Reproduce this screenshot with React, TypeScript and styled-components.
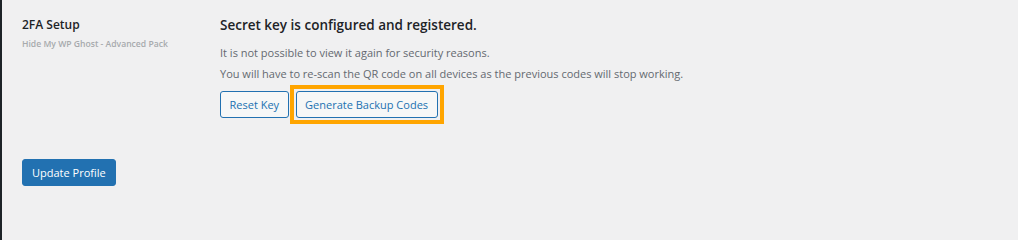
import React from "react";
import styled, { createGlobalStyle } from "styled-components";

const GlobalStyle = createGlobalStyle`
  html, body {
    margin: 0;
    padding: 0;
    background: #f0f0f1;
  }
  body {
    font-family: "Open Sans", "Noto Sans", sans-serif;
    color: #3c434a;
  }
`;

const Page = styled.div`
  display: flex;
  min-height: 100vh;
  background: #f0f0f1;
`;

const MenuEdge = styled.div`
  width: 2px;
  flex: none;
  background: #1d2327;
`;

const Content = styled.div`
  flex: 1;
  padding: 15px 20px 0 20px;
`;

const FormRow = styled.div`
  display: grid;
  grid-template-columns: 198px 1fr;
`;

const Label = styled.div`
  display: flex;
  flex-direction: column;
`;

const LabelTitle = styled.div`
  font-size: 12px;
  font-weight: 600;
  line-height: 20px;
  color: #1d2327;
`;

const LabelSub = styled.div`
  font-size: 8.6px;
  font-weight: 600;
  line-height: 12px;
  margin-top: 3px;
  color: #a7aaad;
`;

const Field = styled.div`
  display: flex;
  flex-direction: column;
`;

const Heading = styled.div`
  font-size: 13.5px;
  font-weight: 600;
  line-height: 20px;
  color: #1d2327;
`;

const Note = styled.p`
  margin: 0;
  font-size: 11px;
  line-height: 21px;
  color: #646970;
  &:first-of-type {
    margin-top: 7px;
  }
`;

const ButtonRow = styled.div`
  display: flex;
  align-items: center;
  gap: 1px;
  margin-top: 1px;
`;

const Highlight = styled.span`
  display: inline-flex;
  padding: 2px;
  border: 4px solid #ffa500;
`;

const Button = styled.button<{ $primary?: boolean }>`
  font-family: "Open Sans", "Noto Sans", sans-serif;
  font-size: 11px;
  line-height: 25px;
  height: 27px;
  padding: 0 ${(p) => (p.$primary ? "9px" : "8.5px")};
  margin: 0;
  border-radius: 3px;
  border: 1px solid #2271b1;
  background: ${(p) => (p.$primary ? "#2271b1" : "#f6f7f7")};
  color: ${(p) => (p.$primary ? "#ffffff" : "#2271b1")};
  cursor: pointer;
  white-space: nowrap;
`;

const Footer = styled.div`
  margin-top: 35px;
`;

export default function App() {
  return (
    <>
      <GlobalStyle />
      <Page>
        <MenuEdge />
        <Content>
          <FormRow>
            <Label>
              <LabelTitle>2FA Setup</LabelTitle>
              <LabelSub>Hide My WP Ghost - Advanced Pack</LabelSub>
            </Label>
            <Field>
              <Heading>Secret key is configured and registered.</Heading>
              <Note>It is not possible to view it again for security reasons.</Note>
              <Note>
                You will have to re-scan the QR code on all devices as the previous codes will stop working.
              </Note>
              <ButtonRow>
                <Button>Reset Key</Button>
                <Highlight>
                  <Button>Generate Backup Codes</Button>
                </Highlight>
              </ButtonRow>
            </Field>
          </FormRow>
          <Footer>
            <Button $primary>Update Profile</Button>
          </Footer>
        </Content>
      </Page>
    </>
  );
}
